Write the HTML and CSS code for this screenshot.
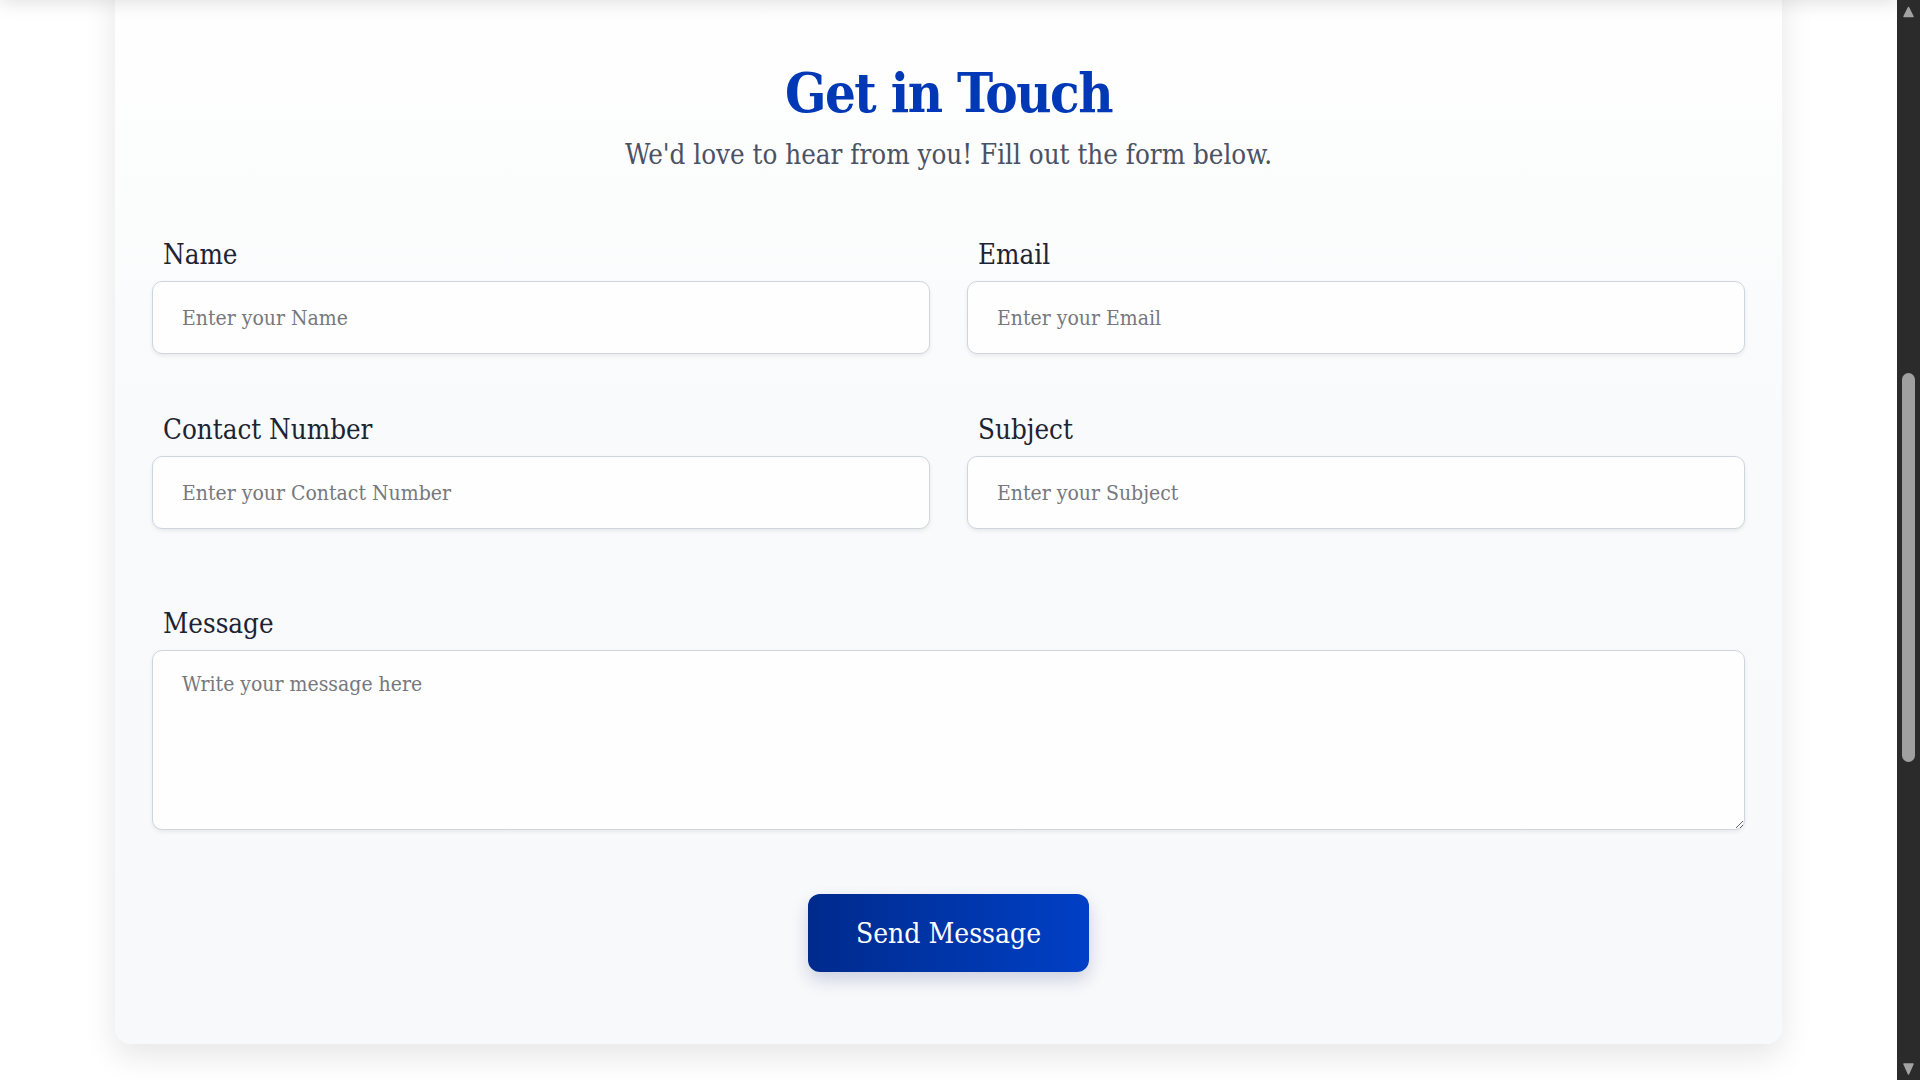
FILE: index.html
```html
<!DOCTYPE html>
<html lang="en">
<head>
<meta charset="utf-8">
<title>Contact Us</title>
<link rel="stylesheet" href="styles.css">
</head>
<body>
<header class="hero"></header>
<main class="contact">
  <section class="card">
    <h1 class="title">Get in Touch</h1>
    <p class="subtitle">We'd love to hear from you! Fill out the form below.</p>
    <form class="form">
      <div class="grid">
        <div class="field">
          <label class="label" for="name">Name</label>
          <input class="input" id="name" type="text" placeholder="Enter your Name">
        </div>
        <div class="field">
          <label class="label" for="email">Email</label>
          <input class="input" id="email" type="email" placeholder="Enter your Email">
        </div>
        <div class="field">
          <label class="label" for="phone">Contact Number</label>
          <input class="input" id="phone" type="tel" placeholder="Enter your Contact Number">
        </div>
        <div class="field">
          <label class="label" for="subject">Subject</label>
          <input class="input" id="subject" type="text" placeholder="Enter your Subject">
        </div>
      </div>
      <div class="field message">
        <label class="label" for="message">Message</label>
        <textarea class="input textarea" id="message" placeholder="Write your message here"></textarea>
      </div>
      <div class="actions">
        <button type="button" class="send">Send Message</button>
      </div>
    </form>
  </section>
</main>
<footer class="footer"></footer>
<aside class="scrollbar" aria-hidden="true">
  <svg class="scrollbar-svg" width="23" height="1080" viewBox="0 0 23 1080">
    <path d="M11.5 7.5 L16 16.5 L7 16.5 Z" fill="#a3a3a3" stroke="#a3a3a3" stroke-width="1.5" stroke-linejoin="round"/>
    <rect x="5" y="373" width="13" height="389" rx="6.5" fill="#a0a0a0"/>
    <path d="M7 1064 L16 1064 L11.5 1074 Z" fill="#a3a3a3" stroke="#a3a3a3" stroke-width="1.5" stroke-linejoin="round"/>
  </svg>
</aside>
<script src="script.js"></script>
</body>
</html>
```
FILE: styles.css
```css
html {
  background: #ffffff;
}
body {
  margin: 0 23px 0 0;
  background: #ffffff;
  font-family: "Roboto Slab", "DejaVu Serif", serif;
  font-stretch: condensed;
  color: #1f2937;
}
.hero {
  height: 972px;
  background: #ffffff;
  position: relative;
  z-index: 2;
  box-shadow: 0 2px 18px rgba(0, 0, 0, 0.13);
}
.contact {
  padding: 0 115px 831px;
}
.card {
  margin-top: -24px;
  background: linear-gradient(180deg, #ffffff 0%, #f9fafb 40%, #f8f9fb 100%);
  border-radius: 16px;
  box-shadow: 0 12px 32px rgba(0, 0, 0, 0.1);
  padding: 85px 37px 72px;
}
.title {
  margin: 0;
  text-align: center;
  font-size: 54px;
  line-height: 64px;
  font-weight: 700;
  letter-spacing: -1.5px;
  color: #0038b5;
}
.subtitle {
  margin: 13px 0 0;
  text-align: center;
  font-size: 27.5px;
  line-height: 32px;
  color: #4b5263;
}
.form {
  margin-top: 67px;
}
.grid {
  display: grid;
  grid-template-columns: 1fr 1fr;
  column-gap: 37px;
  row-gap: 58px;
}
.field {
  display: flex;
  flex-direction: column;
}
.label {
  display: block;
  padding-left: 11px;
  margin-bottom: 10px;
  font-size: 27.5px;
  line-height: 34px;
  color: #1c2433;
}
.input {
  box-sizing: border-box;
  height: 73px;
  width: 100%;
  margin: 0;
  padding: 0 29px;
  border: 1px solid #cfd5df;
  border-radius: 10px;
  background: #fefefe;
  box-shadow: 0 2px 4px rgba(0, 0, 0, 0.07);
  font-family: inherit;
  font-stretch: inherit;
  font-size: 21px;
  color: #1f2937;
  outline: none;
}
.input::placeholder {
  color: #76787d;
  opacity: 1;
}
.message {
  margin-top: 77px;
}
.textarea {
  height: 180px;
  padding: 21px 29px;
  resize: vertical;
  display: block;
}
.actions {
  margin-top: 64px;
  display: flex;
  justify-content: center;
}
.send {
  height: 78px;
  padding: 0 48px;
  border: none;
  border-radius: 12px;
  background: linear-gradient(90deg, #002a8c 0%, #0040c6 100%);
  box-shadow: 0 8px 18px rgba(0, 30, 100, 0.18);
  color: #ffffff;
  font-family: inherit;
  font-stretch: inherit;
  font-size: 28px;
  cursor: pointer;
}
.footer {
  height: 24px;
}
.scrollbar {
  position: fixed;
  top: 0;
  right: 0;
  width: 23px;
  height: 100vh;
  background: #2b2b2b;
  z-index: 10;
}
.scrollbar-svg {
  display: block;
}
```
FILE: script.js
```js
if ('scrollRestoration' in history) {
  history.scrollRestoration = 'manual';
}
window.scrollTo(0, 972);
```
